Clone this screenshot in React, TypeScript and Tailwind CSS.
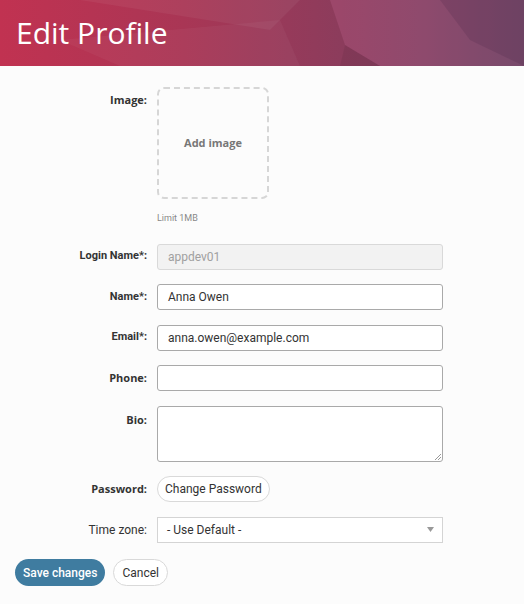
import React from "react";

const roboto = { fontFamily: "Roboto, 'Liberation Sans', sans-serif" };
const openSans = { fontFamily: "'Open Sans', 'Liberation Sans', sans-serif" };

function Label({ children, font = "os", bold = true }: { children: React.ReactNode; font?: "os" | "rb"; bold?: boolean }) {
  return (
    <div
      className={`w-[157px] shrink-0 pr-[10px] text-right ${bold ? "text-[11px] font-bold" : "text-[12px] font-normal"} text-[#333]`}
      style={font === "os" ? openSans : roboto}
    >
      {children}
    </div>
  );
}

export default function App() {
  return (
    <div className="min-h-[604px] w-[524px] bg-[#fcfcfc]" style={roboto}>
      <div className="relative h-[66px] overflow-hidden bg-[linear-gradient(90deg,#c13251_0%,#a93655_35%,#963a5a_55%,#7d3f5f_80%,#5e3f5d_100%)]">
        <svg className="absolute inset-0" width="524" height="66" viewBox="0 0 524 66" preserveAspectRatio="none">
          <polygon points="80,0 300,0 270,30" fill="#ffffff" opacity="0.05" />
          <polygon points="60,40 280,20 300,66 120,66" fill="#ffffff" opacity="0.04" />
          <polygon points="330,0 524,0 524,66 380,66 345,45" fill="#d070a0" opacity="0.22" />
          <polygon points="345,45 380,66 340,66" fill="#000000" opacity="0.06" />
          <polygon points="440,0 524,0 524,66 470,40" fill="#402040" opacity="0.18" />
        </svg>
        <div className="relative pl-[16px] pt-[13px] text-[30px] leading-[40px] text-white" style={openSans}>
          Edit Profile
        </div>
      </div>

      <div className="flex flex-col pt-[21px]">
        <div className="flex">
          <div className="pt-[5px]">
            <Label>Image:</Label>
          </div>
          <div className="flex flex-col">
            <div className="flex h-[112px] w-[112px] items-center justify-center rounded-[7px] border-[2px] border-dashed border-[#d6d6d6]">
              <span className="text-[11px] font-bold text-[#777]" style={openSans}>Add image</span>
            </div>
            <div className="mt-[13px] text-[9px] text-[#888]">Limit 1MB</div>
          </div>
        </div>

        <div className="mt-[18px] flex flex-col gap-[14.5px]">
          <div className="flex items-center">
            <Label font="rb">Login Name*:</Label>
            <div className="flex h-[26px] w-[286px] items-center rounded-[3px] border border-[#d9d9d9] bg-[#f2f2f2] px-[10px] text-[12px] text-[#a0a0a0]">
              appdev01
            </div>
          </div>
          <div className="flex items-center">
            <Label font="rb">Name*:</Label>
            <div className="flex h-[26px] w-[286px] items-center rounded-[3px] border border-[#a9a9a9] bg-white px-[10px] text-[12px] text-[#333]">
              Anna Owen
            </div>
          </div>
          <div className="flex items-center">
            <Label font="rb">Email*:</Label>
            <div className="flex h-[26px] w-[286px] items-center rounded-[3px] border border-[#a9a9a9] bg-white px-[10px] text-[12px] text-[#333]">
              anna.owen@example.com
            </div>
          </div>
          <div className="flex items-center">
            <Label>Phone:</Label>
            <div className="h-[26px] w-[286px] rounded-[3px] border border-[#a9a9a9] bg-white" />
          </div>
          <div className="flex items-start">
            <div className="pt-[6px]">
              <Label>Bio:</Label>
            </div>
            <div className="relative h-[56px] w-[286px] rounded-[3px] border border-[#a9a9a9] bg-white">
              <svg className="absolute bottom-[1px] right-[1px]" width="7" height="7" viewBox="0 0 7 7">
                <line x1="1" y1="7" x2="7" y2="1" stroke="#999" strokeWidth="1" />
                <line x1="4" y1="7" x2="7" y2="4" stroke="#999" strokeWidth="1" />
              </svg>
            </div>
          </div>
          <div className="flex items-center">
            <Label>Password:</Label>
            <div className="flex h-[26px] items-center rounded-full border border-[#d9d9d9] bg-white px-[7px] text-[12px] text-[#333]">
              Change Password
            </div>
          </div>
          <div className="flex items-center">
            <Label font="rb" bold={false}>Time zone:</Label>
            <div className="flex h-[26px] w-[286px] items-center justify-between border border-[#d4d4d4] bg-white pl-[9px] pr-[8px] text-[12px] text-[#333]">
              <span>- Use Default -</span>
              <svg width="7" height="5" viewBox="0 0 7 5">
                <polygon points="0,0 7,0 3.5,5" fill="#999" />
              </svg>
            </div>
          </div>
          <div className="mt-[2px] flex items-center gap-[8px] pl-[15px]">
            <div className="flex h-[27px] items-center rounded-full bg-[#3f7ca0] px-[8px] text-[12px] font-medium text-white">
              Save changes
            </div>
            <div className="flex h-[27px] items-center rounded-full border border-[#d9d9d9] bg-white px-[8px] text-[12px] text-[#333]">
              Cancel
            </div>
          </div>
        </div>
      </div>
    </div>
  );
}
